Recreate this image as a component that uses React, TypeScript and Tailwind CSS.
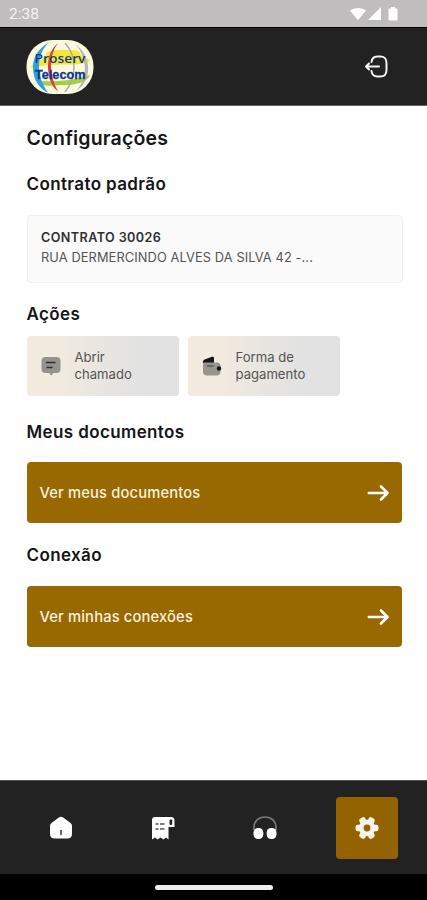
import React from "react";

function Logo() {
  return (
    <svg className="block h-[56px] w-[68px]" viewBox="0 0 68 56">
      <defs>
        <clipPath id="logo-shape"><rect x="0.5" y="1" width="67" height="54" rx="26" /></clipPath>
      </defs>
      <g clipPath="url(#logo-shape)">
        <rect width="68" height="56" fill="#fbfae0" />
        <path d="M21 13C32 10 48 10 54 13C53 18 61 17 64 22C52 29 36 22 5 29C5 23 20 22 21 13Z" fill="#f5e63a" />
        <path d="M12 42C28 43 46 42 64 36C62 43 48 47 34 46C26 47 14 48 12 42Z" fill="#a5d045" />
        <path d="M23 3C11 11 7 18 7 29C7 41 14 50 22 54C16 45 13 36 13 28C13 18 16 10 23 3Z" fill="#2ba3dc" />
        <path d="M32 4C23 12 22 20 22 30C23 42 27 49 32 52C27 44 26 36 25 28C25 18 27 11 32 4Z" fill="#e33c38" />
        <path d="M39 4C52 18 50 40 39 53" fill="none" stroke="#aaa898" strokeWidth="1.300" />
        <path d="M49 5C67 18 66 42 50 52C61 40 63 20 49 5Z" fill="#b5b5b5" />
        <text x="8.500" y="24" textLength="51" lengthAdjust="spacingAndGlyphs" fontFamily="Open Sans, sans-serif" fontSize="12.800" fontWeight="600" fill="#17398f">Proserv</text>
        <text x="9" y="39.500" textLength="50.500" lengthAdjust="spacingAndGlyphs" fontFamily="Liberation Sans, sans-serif" fontSize="12.500" fontWeight="700" fill="#12358f" stroke="#12358f" strokeWidth=".3">Telecom</text>
      </g>
    </svg>
  );
}

function StatusIcons() {
  return (
    <svg className="block h-[16px] w-[52px]" viewBox="0 0 52 16" fill="#fff">
      <path d="M0 4.500C4.500 1 11.500 1 16 4.500L8 14.200Z" />
      <path d="M31 1V14H18Z" />
      <path d="M41 1h4v1.500h1.500q1 0 1 1V13.500q0 1-1 1h-7q-1 0-1-1V3.500q0-1 1-1h1.500z" />
    </svg>
  );
}

function LogoutIcon() {
  return (
    <svg className="block h-[26px] w-[26px]" viewBox="0 0 26 26" fill="none" stroke="#f4f4f4" strokeWidth="2" strokeLinecap="round" strokeLinejoin="round">
      <path d="M8.500 8C9 4 10.500 2.500 14.500 2.500H17c5 0 6.500 2 6.500 7v6c0 5-1.500 7-6.500 7h-2.500c-4 0-5.500-1.500-6-5.500M16 12.500H3M6 9.500L3 12.500 6 15.500" />
    </svg>
  );
}

function ChatIcon() {
  return (
    <svg className="block h-[20px] w-[20px]" viewBox="0 0 20 20">
      <path d="M4.500 1H15.500q4 0 4 4v8q0 4-4 4h-3l-2.200 2.500L8 17H4.500q-4 0-4-4V5q0-4 4-4Z" fill="#96938e" />
      <path d="M5 6.500h9.500M5.500 11.500h6" stroke="#302f2d" strokeWidth="1.300" />
    </svg>
  );
}

function WalletIcon() {
  return (
    <svg className="block h-[20px] w-[20px]" viewBox="0 0 20 20">
      <path d="M.8 7Q.8 3.500 4 3L10 .8Q12 .3 12 2v5Z" fill="#151515" />
      <path d="M1 6.500h14q3 0 3.500 3v6q0 4-4 4H5q-4 0-4-4Z" fill="#98958f" />
      <path d="M5 10h6.500" stroke="#494744" strokeWidth="1.200" />
      <circle cx="17" cy="12.500" r="2.200" fill="#151515" />
    </svg>
  );
}

function Action({ icon, first, second }: { icon: React.ReactNode; first: string; second: string }) {
  return (
    <button className="flex h-[60px] w-[152px] items-center gap-[14px] rounded bg-linear-to-r from-[#f2ebdf] from-15% to-[#e2e2e2] to-75% px-[14px] text-left">
      {icon}
      <span className="text-[13.100px] leading-[17px] text-[#535353]">{first}<br />{second}</span>
    </button>
  );
}

function LinkButton({ children }: { children: React.ReactNode }) {
  return (
    <button className="flex h-[61px] w-[375.500px] items-center justify-between rounded bg-[#976900] px-[13px] text-[14.750px] font-medium tracking-[0.14px] text-[#fbf0df]">
      <span className="pt-px">{children}</span>
      <svg className="h-[18px] w-[24px]" viewBox="0 0 24 18" fill="none" stroke="#fff" strokeWidth="2.600" strokeLinecap="round" strokeLinejoin="round">
        <path d="M3.800 9H22.500M16 2.500l6.500 6.500-6.500 6.500" />
      </svg>
    </button>
  );
}

function HomeIcon() {
  return (
    <svg className="h-[26px] w-[26px]" viewBox="0 0 26 26">
      <path d="M3.500 8Q2 9.200 2 11V18.500Q2 23.500 6.500 23.500H19.500Q24 23.500 24 18.500V11Q24 9 22.500 8L15.500 2.700Q13 1 10.500 2.700Z" fill="#fff" />
      <path d="M13 15.500v4" stroke="#333" strokeWidth="1.500" strokeLinecap="round" />
    </svg>
  );
}

function ReceiptIcon() {
  return (
    <svg className="h-[26px] w-[26px]" viewBox="0 0 26 26">
      <path d="M2 5q0-3 3-3H21q3.500 0 3.500 3.500V12H18.500V24.500l-2.500-2-2.500 2-3-2-3 2-2.500-2-3 2Z" fill="#fff" />
      <rect x="19.500" y="4.500" width="2.700" height="5.500" rx="1" fill="#222" />
      <path d="M5.500 9h3m1.500 0h4.500M5.500 14h3m1.500 0h4.500" stroke="#555" strokeWidth="1.300" />
    </svg>
  );
}

function HeadphonesIcon() {
  return (
    <svg className="h-[26px] w-[26px]" viewBox="0 0 26 26">
      <path d="M2 15V12.500C2 6 6.500 2 13 2S24 6 24 12.500V15" fill="none" stroke="#777" strokeWidth="1.700" />
      <rect x="1.500" y="13" width="9.800" height="11" rx="4.500" fill="#fff" />
      <rect x="14.700" y="13" width="9.800" height="11" rx="4.500" fill="#fff" />
    </svg>
  );
}

function SettingsIcon() {
  return (
    <svg className="h-[24px] w-[24px]" viewBox="0 0 24 24" fill="#f9f4ea">
      <circle cx="12" cy="12" r="8.200" />
      <g>
        <rect x="8.700" y="0.500" width="6.600" height="23" rx="2.300" transform="rotate(30 12 12)" />
        <rect x="8.700" y="0.500" width="6.600" height="23" rx="2.300" transform="rotate(90 12 12)" />
        <rect x="8.700" y="0.500" width="6.600" height="23" rx="2.300" transform="rotate(150 12 12)" />
      </g>
      <circle cx="12" cy="12" r="3.400" fill="#926300" />
    </svg>
  );
}

function NavItem({ children }: { children: React.ReactNode }) {
  return <button className="flex h-[62px] w-[62px] items-center justify-center">{children}</button>;
}

export default function App() {
  return (
    <div className="flex h-[900px] w-[427px] flex-col overflow-hidden bg-white font-['Inter',sans-serif]">
      <div className="flex h-[27px] shrink-0 items-center justify-between bg-[#bfbdbe] pr-[25.500px] pl-[9px] text-[#f4f4f4]">
        <span className="pt-[2px] font-['Roboto',sans-serif] text-[15.500px]">2:38</span>
        <StatusIcons />
      </div>
      <header className="flex h-[79px] shrink-0 items-center justify-between border-t border-b border-t-black border-b-[#666] bg-[#222] pr-[38px] pl-[26px]">
        <Logo />
        <LogoutIcon />
      </header>
      <main className="flex h-[674px] shrink-0 flex-col pt-[18px] pl-[26.500px] text-[#151515]">
        <h1 className="h-7 text-[19.500px] leading-7 font-semibold tracking-[0.18px]">Configurações</h1>
        <h2 className="mt-5 h-6 text-[17px] leading-6 font-semibold tracking-[0.38px]">Contrato padrão</h2>
        <section className="mt-[18.500px] h-[68px] w-[376.500px] rounded border border-[#f0f0f0] bg-[#fafafa] px-[13.500px] pt-[12px]">
          <h3 className="text-[12.600px] leading-[20px] font-semibold tracking-[0.42px] text-[#303030]">CONTRATO 30026</h3>
          <p className="text-[12.800px] leading-[19px] tracking-[0.12px] text-[#555]">RUA DERMERCINDO ALVES DA SILVA 42 -...</p>
        </section>
        <h2 className="mt-[19.500px] h-6 text-[17px] leading-6 font-semibold tracking-[0.38px]">Ações</h2>
        <div className="mt-[10px] flex gap-[9px]">
          <Action icon={<ChatIcon />} first="Abrir" second="chamado" />
          <Action icon={<WalletIcon />} first="Forma de" second="pagamento" />
        </div>
        <h2 className="mt-6 mb-[18px] h-6 text-[17px] leading-6 font-semibold tracking-[0.38px]">Meus documentos</h2>
        <LinkButton>Ver meus documentos</LinkButton>
        <h2 className="mt-5 mb-[19px] h-6 text-[17px] leading-6 font-semibold tracking-[0.38px]">Conexão</h2>
        <LinkButton>Ver minhas conexões</LinkButton>
      </main>
      <nav className="flex h-[94px] shrink-0 items-center gap-[40px] border-t border-t-[#555] bg-[#222] pl-[30px]">
        <NavItem><HomeIcon /></NavItem>
        <NavItem><ReceiptIcon /></NavItem>
        <NavItem><HeadphonesIcon /></NavItem>
        <button className="flex h-[62px] w-[62px] items-center justify-center rounded bg-[#926300]"><SettingsIcon /></button>
      </nav>
      <div className="flex h-[26px] shrink-0 items-center justify-center bg-black">
        <div className="h-[5px] w-[118px] rounded-full bg-[#ededed]" />
      </div>
    </div>
  );
}
